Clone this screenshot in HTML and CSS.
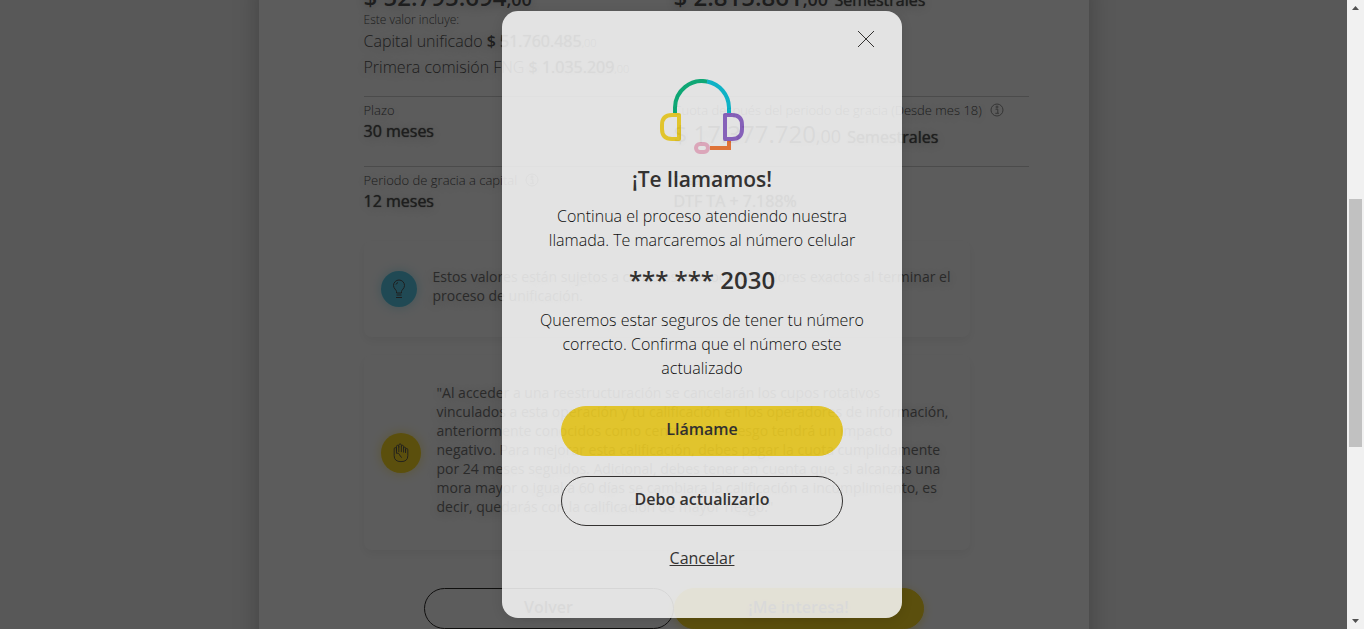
FILE: index.html
```html
<!DOCTYPE html>
<html lang="es">
<head>
<meta charset="utf-8">
<title>Unificación</title>
<link rel="stylesheet" href="styles.css">
</head>
<body>
<div class="window">
  <div class="view">
    <main class="sheet">
      <section class="row row-first">
        <div class="cell">
          <p class="amount">$ 52.795.694<span class="cents">,00</span></p>
          <p class="small">Este valor incluye:</p>
          <p class="line">Capital unificado <b>$</b> <span class="strong">51.760.485</span><span class="tiny">,00</span></p>
          <p class="line">Primera comisión FNG <b>$</b> <span class="strong">1.035.209</span><span class="tiny">,00</span></p>
        </div>
        <div class="cell">
          <p class="amount">$ 2.815.861<span class="cents">,00</span> <span class="period">Semestrales</span></p>
        </div>
      </section>
      <section class="row">
        <div class="cell">
          <p class="label">Plazo</p>
          <p class="value">30 meses</p>
        </div>
        <div class="cell">
          <p class="label">Cuota después del periodo de gracia (Desde mes 18)
            <svg class="info" viewBox="0 0 14 14"><circle cx="7" cy="7" r="6"/><circle cx="7" cy="4" r="1"/><path d="M5.5 6.2H7.8V10M5.3 10.3H8.9"/></svg></p>
          <p class="quota">$ 17.377.720<span class="cents">,00</span> <span class="period">Semestrales</span></p>
        </div>
      </section>
      <section class="row">
        <div class="cell">
          <p class="label">Periodo de gracia a capital
            <svg class="info" viewBox="0 0 14 14"><circle cx="7" cy="7" r="6"/><circle cx="7" cy="4" r="1"/><path d="M5.5 6.2H7.8V10M5.3 10.3H8.9"/></svg></p>
          <p class="value">12 meses</p>
        </div>
        <div class="cell">
          <p class="label">Tasa
            <svg class="info" viewBox="0 0 14 14"><circle cx="7" cy="7" r="6"/><circle cx="7" cy="4" r="1"/><path d="M5.5 6.2H7.8V10M5.3 10.3H8.9"/></svg></p>
          <p class="value">DTF TA + 7.188%</p>
        </div>
      </section>
      <section class="note note-info">
        <span class="badge badge-blue">
          <svg viewBox="0 0 20 20"><path d="M7.5 14V12.5C7.5 11 4.5 9.500 4.500 6.500a5.500 5.500 0 0 1 11 0C15.500 9.500 12.500 11 12.500 12.500V14ZM7.500 16H12.500M7 18.500H13M7 5.500Q7.500 4 9 3.600"/></svg>
        </span>
        <p>Estos valores están sujetos a cambios. Conoce los valores exactos al terminar el proceso de unificación.</p>
      </section>
      <section class="note note-warning">
        <span class="badge badge-yellow">
          <svg viewBox="0 0 20 22"><path d="M2.500 6.500V14Q2.500 20.500 10 20.500T17.500 14V7.500Q17.500 6 16.300 6T15 7.500V11M2.500 6.500Q2.500 5 3.800 5T5 6.500V11.500M5 9V4Q5 2.500 6.300 2.500T7.600 4V10M7.600 5V2.500Q7.600 1 9 1T10.400 2.500V10M10.400 4Q10.400 2.500 11.600 2.500T12.800 4V10.500M12.800 6Q12.800 4.500 14 4.500T15 6V9M5 11Q8 11 8.500 13T11 16"/></svg>
        </span>
        <p>"Al acceder a una reestructuración se cancelarán los cupos rotativos<br>vinculados a esta operación y tu calificación en los operadores de información, anteriormente conocidos como centrales de riesgo tendrá un impacto<br>negativo. Para mejorar esta calificación, debes pagar la cuota cumplidamente por 24 meses seguidos. Adicional, debes tener en cuenta que, si alcanzas una mora mayor o igual a 60 días se cambiara la calificación a incumplimiento, es decir, quedarás con la calificación de mayor riesgo."</p>
      </section>
      <div class="actions">
        <button class="action" type="button">Volver</button>
        <button class="action action-primary" type="button">¡Me interesa!</button>
      </div>
    </main>
    <div class="overlay">
      <div class="modal" role="dialog" aria-modal="true" aria-labelledby="modal-title">
        <button class="close" type="button" aria-label="Cerrar">
          <svg viewBox="0 0 18 18"><path d="M1 1L17 17M17 1L1 17"/></svg>
        </button>
        <svg class="headset" viewBox="0 0 84 75">
          <path d="M15 35V28.500A27 27 0 0 1 47.500 2.600" stroke="#00b77b" stroke-width="4"/>
          <path d="M47 2.500A27 27 0 0 1 69 28.500V35" stroke="#00c4dc" stroke-width="4"/>
          <path d="M69 60V69H50" stroke="#fa7832" stroke-width="4"/>
          <path d="M19 36H12Q2 36 2 46V50Q2 60 12 60H19Z" stroke="#fdda24" stroke-width="4" stroke-linejoin="round"/>
          <path d="M65 36H72Q82 36 82 46V50Q82 60 72 60H65Z" stroke="#9063cd" stroke-width="4" stroke-linejoin="round"/>
          <rect x="36" y="65" width="12" height="8" rx="4" stroke="#f5b6cd" stroke-width="4"/>
        </svg>
        <h1 id="modal-title" class="title">¡Te llamamos!</h1>
        <p class="text">Continua el proceso atendiendo nuestra llamada. Te marcaremos al número celular</p>
        <p class="phone">*** *** 2030</p>
        <p class="text">Queremos estar seguros de tener tu número correcto. Confirma que el número este actualizado</p>
        <button class="pill pill-primary" type="button">Llámame</button>
        <button class="pill" type="button">Debo actualizarlo</button>
        <a class="cancel" href="#">Cancelar</a>
      </div>
    </div>
  </div>
  <div class="scrollbar" aria-hidden="true">
    <svg viewBox="0 0 7 4"><path d="M0 4L3.500 0L7 4Z"/></svg>
    <div class="track"><div class="thumb"></div></div>
    <svg viewBox="0 0 7 4"><path d="M0 0L3.500 4L7 0Z"/></svg>
  </div>
</div>
</body>
</html>
```
FILE: styles.css
```css
* { box-sizing: border-box; }
body {
  margin: 0;
  font-family: "Open Sans", "Noto Sans", sans-serif;
  font-weight: 300;
  color: #2c2a29;
}
p, h1 { margin: 0; }
button { font: inherit; color: inherit; cursor: pointer; }
svg { fill: none; stroke: currentColor; }
b { font-weight: 600; }

.window { display: flex; height: 100vh; overflow: hidden; }
.view { flex: 1; position: relative; overflow: hidden; background: #f3f3f3; }

.sheet {
  max-width: 830px;
  min-height: 120vh;
  margin: -17px auto 0;
  padding: 0 60px 0 105px;
  background: #fff;
  box-shadow: 0 0 24px rgba(0, 0, 0, 0.25);
  color: #545454;
  text-shadow: 0 2px 12px rgba(0, 0, 0, 0.3);
}
.row {
  display: grid;
  grid-template-columns: 310px 1fr;
  height: 70px;
  border-top: 1px solid #cfcfcf;
  padding-top: 2px;
}
.row-first { height: 113px; border-top: 0; padding-top: 0; }
.amount { font-size: 24px; line-height: 28px; font-weight: 600; white-space: nowrap; }
.cents { font-size: 18px; line-height: 1; }
.period { font-size: 16px; line-height: 1; }
.strong, .period, .value {
  font-weight: 400;
  text-shadow: 0 0 1px #545454, 0 2px 12px rgba(0, 0, 0, 0.3);
}
.small { padding-top: 1px; font-size: 12px; line-height: 16px; }
.line { font-size: 16px; line-height: 26px; }
.tiny { font-size: 11px; line-height: 1; }
.label { display: flex; align-items: center; gap: 8px; font-size: 13px; line-height: 22px; white-space: nowrap; }
.info { width: 14px; height: 14px; color: #909090; }
.value { font-size: 16px; line-height: 20px; }
.quota { font-size: 24px; line-height: 26px; font-weight: 400; }

.note {
  display: flex;
  align-items: center;
  gap: 16px;
  max-width: 606px;
  padding: 0 17px;
  border-radius: 8px;
  box-shadow: 0 4px 10px rgba(0, 0, 0, 0.06);
  font-size: 14px;
  line-height: 19px;
  font-weight: 400;
}
.note p { flex: 1; padding-bottom: 6px; color: #757575; }
.note-info { height: 96px; margin-top: 5px; }
.note-warning { height: 195px; margin-top: 18px; }
.badge {
  display: flex;
  flex: none;
  align-items: center;
  justify-content: center;
  width: 36px;
  height: 36px;
  border-radius: 50%;
}
.badge svg { width: 20px; height: 20px; }
.badge-blue { background: #59cbe8; box-shadow: 0 0 12px rgba(89, 203, 232, 0.5); }
.badge-yellow { width: 40px; height: 40px; background: #fdda24; box-shadow: 0 0 12px rgba(253, 218, 36, 0.5); }

.actions { display: flex; margin: 38px 0 0 60px; }
.action {
  width: 250px;
  height: 41px;
  padding: 0 0 4px;
  border: 1px solid #2c2a29;
  border-radius: 21px;
  background: none;
  font-weight: 600;
  font-size: 16px;
  text-shadow: inherit;
}
.action-primary { border-color: #fdda24; background: #fdda24; box-shadow: 0 2px 10px rgba(253, 218, 36, 0.5); }

.overlay {
  position: absolute;
  inset: 0;
  display: flex;
  align-items: center;
  justify-content: center;
  padding-left: 57px;
  background: rgba(0, 0, 0, 0.64);
}
.modal {
  display: flex;
  flex-direction: column;
  align-items: center;
  width: 400px;
  padding: 18px 36px 48px;
  border-radius: 16px;
  background: #fff;
  box-shadow: 0 2px 12px rgba(0, 0, 0, 0.1);
  opacity: 0.83;
  text-align: center;
  color: #2c2a29;
}
.close {
  align-self: flex-end;
  display: flex;
  margin-right: -10px;
  padding: 1px;
  border: 0;
  background: none;
}
.close svg { width: 18px; height: 18px; }
.headset { width: 84px; height: 75px; margin-top: 30px; }
.title { margin: 10px 0; font-size: 21px; line-height: 30px; font-weight: 600; }
.text { font-size: 16px; line-height: 24px; font-weight: 300; color: #000; }
.phone { margin: 12px 0; font-size: 24px; line-height: 32px; font-weight: 600; }
.pill {
  width: 282px;
  height: 50px;
  margin-top: 20px;
  padding: 0 0 4px;
  border: 1px solid #2c2a29;
  border-radius: 25px;
  background: none;
  font-size: 16px;
  font-weight: 600;
}
.pill-primary { margin-top: 26px; border-color: #fdda24; background: #fdda24; }
.cancel { margin-top: 20px; font-size: 16px; line-height: 24px; font-weight: 400; color: inherit; }

.scrollbar {
  display: flex;
  flex-direction: column;
  align-items: center;
  flex: none;
  width: 17px;
  padding: 6px 0;
  background: #f1f1f1;
}
.scrollbar svg { width: 7px; height: 4px; fill: #505050; stroke: none; }
.track { flex: 1; width: 13px; padding-top: 189px; }
.thumb { height: 248px; background: #c1c1c1; }
```
